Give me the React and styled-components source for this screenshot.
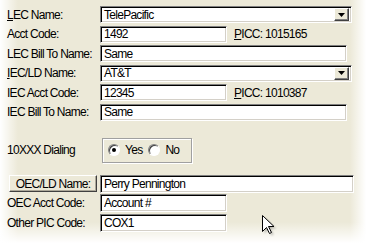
import React from 'react';
import styled, {createGlobalStyle} from 'styled-components';

const GlobalStyle = createGlobalStyle`
  html, body {
    margin: 0;
    padding: 0;
    background: #fff;
  }
  body {
    font-family: "Liberation Sans", Arial, sans-serif;
  }
`;

const Frame = styled.div`
  position: relative;
  width: 366px;
  height: 243px;
  box-sizing: border-box;
  padding: 6px 0 0 7px;
  overflow: hidden;
  font-size: 12px;
  letter-spacing: -0.72px;
  color: #000;
  background:
    linear-gradient(to bottom, rgba(255,255,255,0) 222px, #fff 243px),
    linear-gradient(to right, #fff 0, rgba(255,255,255,0) 18px, rgba(255,255,255,0) 350px, #fff 366px),
    #ece9d8;
`;

const Row = styled.div`
  display: flex;
  align-items: center;
  height: ${p => p.$h || 17}px;
  margin-top: ${p => p.$gap ?? 2.6}px;
  &:first-child { margin-top: 0; }
`;

const Label = styled.span`
  flex: none;
  width: 93px;
  white-space: nowrap;
`;

const Field = styled.input`
  box-sizing: border-box;
  width: ${p => p.$w}px;
  height: 100%;
  margin: 0;
  padding: 0 0 0 3px;
  font: inherit;
  letter-spacing: inherit;
  color: #000;
  background: #fff;
  border: 1px solid;
  border-color: #7f7f7f #fff #fff #7f7f7f;
  box-shadow: inset 1px 1px #000, inset -1px -1px #d4d0c8;
  outline: none;
`;

const SelectBox = styled.div`
  box-sizing: border-box;
  width: ${p => p.$w}px;
  height: 100%;
  display: flex;
  align-items: center;
  padding: 0 2px 0 3px;
  background: #fff;
  border: 1px solid;
  border-color: #7f7f7f #fff #fff #7f7f7f;
  box-shadow: inset 1px 1px #000, inset -1px -1px #d4d0c8;
`;

const SelectText = styled.span`
  flex: 1;
`;

const DropButton = styled.div`
  box-sizing: border-box;
  width: 15px;
  height: 13px;
  display: flex;
  align-items: center;
  justify-content: center;
  background: #ece9d8;
  border: 1px solid;
  border-color: #fff #404040 #404040 #fff;
  box-shadow: inset -1px -1px #808080;
`;

const Picc = styled.span`
  margin-left: 7px;
  white-space: nowrap;
`;

const GroupBox = styled.div`
  box-sizing: border-box;
  width: 90px;
  height: 25px;
  margin-left: 2px;
  display: flex;
  align-items: center;
  padding-left: 5px;
  border: 1px solid #a0a0a0;
  box-shadow: inset 1px 1px #fff, 1px 1px #fff;
`;

const RadioItem = styled.label`
  display: flex;
  align-items: center;
  margin-right: 6px;
  white-space: nowrap;
`;

const RadioCircle = styled.span`
  box-sizing: border-box;
  width: 12px;
  height: 12px;
  margin-right: 5px;
  border-radius: 50%;
  border: 1px solid;
  border-color: #808080 #fff #fff #808080;
  box-shadow: inset 1px 1px #404040;
  background: #fff;
  display: flex;
  align-items: center;
  justify-content: center;
  &::after {
    content: "";
    width: 4px;
    height: 4px;
    border-radius: 50%;
    background: ${p => (p.$on ? '#000' : 'transparent')};
  }
`;

const LabelButton = styled.div`
  box-sizing: border-box;
  flex: none;
  width: 88px;
  height: 17px;
  margin: 0 3px 0 2px;
  display: flex;
  align-items: center;
  justify-content: center;
  background: #ece9d8;
  border: 1px solid;
  border-color: #fff #404040 #404040 #fff;
  box-shadow: inset -1px -1px #aca899;
  white-space: nowrap;
`;

const Cursor = styled.svg`
  position: absolute;
  left: 262px;
  top: 215px;
`;

function Select({w, value}) {
  return (
    <SelectBox $w={w}>
      <SelectText>{value}</SelectText>
      <DropButton>
        <svg width="7" height="4" viewBox="0 0 7 4"><path d="M0 0h7L3.5 4z" fill="#000"/></svg>
      </DropButton>
    </SelectBox>
  );
}

export default function App() {
  return (
    <Frame>
      <GlobalStyle/>
      <Row>
        <Label><u>L</u>EC Name:</Label>
        <Select w={252} value="TelePacific"/>
      </Row>
      <Row>
        <Label>Acct Code:</Label>
        <Field $w={127} defaultValue="1492" readOnly/>
        <Picc><u>P</u>ICC: 1015165</Picc>
      </Row>
      <Row>
        <Label>LEC Bill To Name:</Label>
        <Field $w={247} defaultValue="Same" readOnly/>
      </Row>
      <Row>
        <Label><u>I</u>EC/LD Name:</Label>
        <Select w={252} value="AT&T"/>
      </Row>
      <Row>
        <Label>IEC Acct Code:</Label>
        <Field $w={127} defaultValue="12345" readOnly/>
        <Picc><u>P</u>ICC: 1010387</Picc>
      </Row>
      <Row>
        <Label>IEC Bill To Name:</Label>
        <Field $w={247} defaultValue="Same" readOnly/>
      </Row>
      <Row $h={25} $gap={17}>
        <Label>10XXX Dialing</Label>
        <GroupBox>
          <RadioItem><RadioCircle $on/>Yes</RadioItem>
          <RadioItem><RadioCircle/>No</RadioItem>
        </GroupBox>
      </Row>
      <Row $h={18} $gap={12}>
        <LabelButton>OEC/LD Name:</LabelButton>
        <Field $w={254} defaultValue="Perry Pennington" readOnly/>
      </Row>
      <Row $h={18} $gap={1.5}>
        <Label>OEC Acct Code:</Label>
        <Field $w={127} defaultValue="Account #" readOnly/>
      </Row>
      <Row $h={18} $gap={1.5}>
        <Label>Other PIC Code:</Label>
        <Field $w={127} defaultValue="COX1" readOnly/>
      </Row>
      <Cursor width="16" height="24" viewBox="0 0 16 24">
        <path d="M2.5 2.5v16l4-4 3 6 2-1-3-6h5.5z" fill="rgba(0,0,0,0.25)" style={{filter: 'blur(1px)'}}/>
        <path d="M0.5 0.5v16l4-4 3 6 2-1-3-6h5.5z" fill="#fff" stroke="#000" strokeWidth="1"/>
      </Cursor>
    </Frame>
  );
}
